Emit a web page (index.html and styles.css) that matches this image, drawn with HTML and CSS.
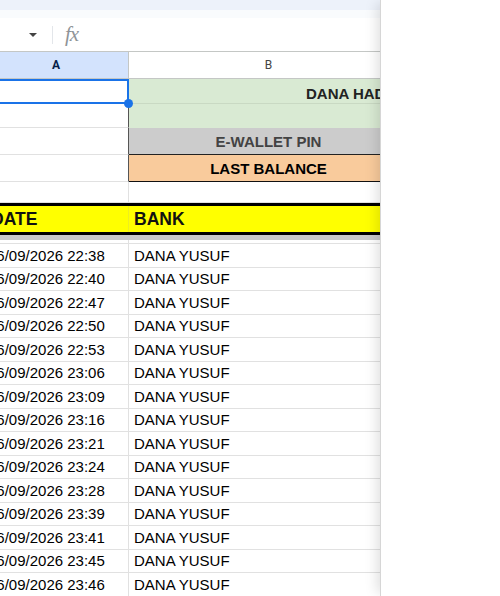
FILE: index.html
```html
<!DOCTYPE html>
<html lang="en">
<head>
    <meta charset="UTF-8">
    <meta name="viewport" content="width=device-width, initial-scale=1.0">
    <title>Sheet</title>
    <link rel="stylesheet" href="styles.css">
</head>
<body>
    <div class="app">
        <div class="sheet">
            <div class="toolbar-edge"></div>
            <div class="toolbar-gap"></div>
            <div class="formula-bar">
                <span class="name-caret"></span>
                <span class="fb-sep"></span>
                <span class="fx">fx</span>
            </div>
            <div class="grid">
                <div class="row col-head">
                    <div class="c-a head-sel">A</div>
                    <div class="c-b">B</div>
                    <div class="c-c"></div>
                </div>
                <div class="row r1">
                    <div class="c-a selected"><span class="fill-handle"></span></div>
                    <div class="c-b green title">DANA HADIAH</div>
                    <div class="c-c"></div>
                </div>
                <div class="row r2">
                    <div class="c-a dark-edge"></div>
                    <div class="c-b green"></div>
                    <div class="c-c"></div>
                </div>
                <div class="row r3">
                    <div class="c-a dark-edge"></div>
                    <div class="c-b grey label">E-WALLET PIN</div>
                    <div class="c-c"></div>
                </div>
                <div class="row r4">
                    <div class="c-a dark-edge"></div>
                    <div class="c-b orange label">LAST BALANCE</div>
                    <div class="c-c"></div>
                </div>
                <div class="row r5">
                    <div class="c-a"></div>
                    <div class="c-b"></div>
                    <div class="c-c"></div>
                </div>
                <div class="row table-head">
                    <div class="c-a">DATE</div>
                    <div class="c-b">BANK</div>
                    <div class="c-c"></div>
                </div>
                <div class="frozen-bar"></div>
                <div class="row partial">
                    <div class="c-a"></div>
                    <div class="c-b"></div>
                    <div class="c-c"></div>
                </div>
                <div id="rows"></div>
            </div>
        </div>
        <div class="panel"></div>
    </div>

    <script>
        const times = ['22:38', '22:40', '22:47', '22:50', '22:53', '23:06', '23:09', '23:16',
                       '23:21', '23:24', '23:28', '23:39', '23:41', '23:45', '23:46'];
        const rows = document.getElementById('rows');
        times.forEach(t => {
            rows.innerHTML += `
                <div class="row data">
                    <div class="c-a">26/09/2026 ${t}</div>
                    <div class="c-b">DANA YUSUF</div>
                    <div class="c-c"></div>
                </div>
            `;
        });
    </script>
</body>
</html>
```

FILE: styles.css
```css
body {
    margin: 0;
    padding: 0;
    height: 596px;
    overflow: hidden;
    font-family: "Liberation Sans", Arial, sans-serif;
    background: #fff;
}
.app {
    display: flex;
    height: 596px;
}
.sheet {
    width: 380px;
    flex-shrink: 0;
    overflow: hidden;
}
.toolbar-edge {
    height: 10px;
    background-color: #edf2fa;
}
.toolbar-gap {
    height: 8px;
    background-color: #f9fbfd;
}
.formula-bar {
    height: 33px;
    display: flex;
    align-items: center;
    background: #fff;
}
.name-caret {
    width: 0;
    height: 0;
    margin-left: 29px;
    border-left: 4px solid transparent;
    border-right: 4px solid transparent;
    border-top: 4px solid #444;
}
.fb-sep {
    width: 1px;
    height: 18px;
    margin-left: 15px;
    background-color: #e3e6ea;
}
.fx {
    margin-left: 12px;
    font-family: "Liberation Serif", serif;
    font-style: italic;
    font-size: 21px;
    color: #8f9498;
    letter-spacing: -1px;
}
.grid {
    margin-left: -16px;
    width: 640px;
}
.row {
    display: flex;
    box-sizing: border-box;
}
.c-a {
    width: 145px;
    flex-shrink: 0;
    box-sizing: border-box;
    border-right: 1px solid #e1e1e1;
    padding-left: 4px;
    white-space: nowrap;
    overflow: hidden;
    display: flex;
    align-items: center;
}
.c-b {
    width: 279px;
    flex-shrink: 0;
    box-sizing: border-box;
    padding-left: 5px;
    white-space: nowrap;
    display: flex;
    align-items: center;
}
.c-c {
    flex: 1;
}

/* column letters */
.col-head {
    height: 28px;
    border-top: 1px solid #c4c7c5;
    border-bottom: 1px solid #c4c7c5;
    font-family: Roboto, "Liberation Sans", sans-serif;
    font-size: 12px;
    color: #444;
}
.col-head .c-a, .col-head .c-b {
    justify-content: center;
    padding-left: 0;
}
.col-head .c-a {
    border-right: 1px solid #c4c7c5;
}
.head-sel {
    background-color: #d3e3fd;
    color: #041e49;
    font-weight: bold;
}

/* top block */
.r1 { height: 25px; }
.r2 { height: 24px; }
.r3, .r4 { height: 27px; }
.r5 { height: 21px; }
.r1 .c-a, .r2 .c-a, .r3 .c-a, .r4 .c-a, .r5 .c-a {
    border-bottom: 1px solid #e1e1e1;
}
.r5 .c-b {
    border-bottom: 1px solid #e1e1e1;
}
.dark-edge {
    border-right-color: #555 !important;
}
.selected {
    position: relative;
    overflow: visible;
    border: 2px solid #1a73e8 !important;
}
.fill-handle {
    position: absolute;
    right: -6px;
    bottom: -6px;
    width: 9px;
    height: 9px;
    border-radius: 50%;
    background-color: #1a73e8;
    z-index: 2;
}
.green {
    background-color: #d9ead3;
}
.r1 .green {
    border-bottom: 1px solid #c9d9c3;
}
.title {
    align-items: flex-end;
    padding-left: 177px;
    padding-bottom: 1px;
    font-size: 15px;
    font-weight: bold;
    color: #222;
}
.grey {
    background-color: #cccccc;
    border-bottom: 1px solid #222;
}
.orange {
    background-color: #f9cb9c;
    border-bottom: 1px solid #111;
}
.label {
    justify-content: center;
    padding-left: 0;
    font-size: 15px;
    font-weight: bold;
}
.grey.label {
    color: #434343;
}
.orange.label {
    color: #000;
}

/* yellow header */
.table-head {
    height: 32px;
    background-color: #ffff00;
    border-top: 3px solid #000;
    border-bottom: 3px solid #000;
    font-size: 17.5px;
    font-weight: bold;
    color: #111;
}
.table-head .c-a {
    padding-left: 7px;
    border-right-color: #eeee20;
}
.frozen-bar {
    height: 5px;
    background-color: #c8c8c8;
}
.partial {
    height: 4px;
    border-bottom: 1px solid #e1e1e1;
}

/* data rows */
.data {
    height: 23.5px;
    border-bottom: 1px solid #e1e1e1;
    font-size: 15px;
    color: #000;
}

.panel {
    flex: 1;
    position: relative;
    z-index: 3;
    background: #fff;
    border-left: 1px solid #d6d6d6;
    box-shadow: -6px 0 12px -3px rgba(0, 0, 0, 0.13);
}
```
